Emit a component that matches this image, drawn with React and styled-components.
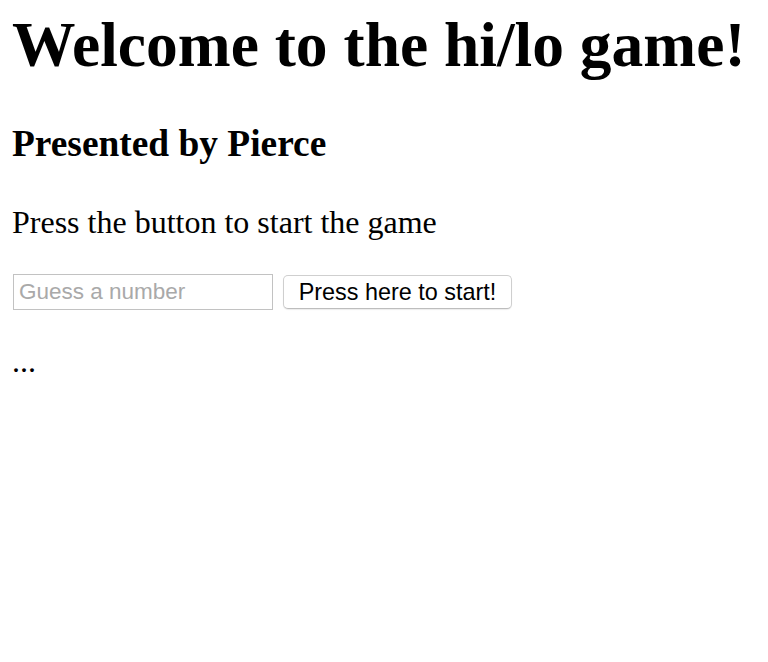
import React, { useState } from 'react';
import styled, { createGlobalStyle } from 'styled-components';

const GlobalStyle = createGlobalStyle`
  body {
    margin: 0;
    padding: 0 12px;
    background: #fff;
    color: #000;
    font-family: 'Liberation Serif', 'Times New Roman', serif;
    font-size: 32px;
  }
`;

const Title = styled.h1`
  margin: 8px 0 0;
  font-size: 63.5px;
  font-weight: bold;
  line-height: normal;
  white-space: nowrap;
`;

const Subtitle = styled.h3`
  margin: 40px 0 0;
  font-size: 37.4px;
  font-weight: bold;
  line-height: normal;
`;

const Text = styled.p`
  margin: ${({ $top }) => $top || '39px'} 0 0;
  font-size: 32px;
  line-height: normal;
`;

const GuessRow = styled.div`
  display: flex;
  align-items: center;
  gap: 10px;
  height: 38px;
  margin-top: 32px;
`;

const GuessInput = styled.input`
  box-sizing: border-box;
  width: 260px;
  height: 36px;
  margin: 0 0 0 1px;
  padding: 0 5px;
  border: 1px solid #c2c2c2;
  border-radius: 0;
  outline: none;
  font-family: 'Liberation Sans', Arial, sans-serif;
  font-size: 22.5px;
  color: #000;

  &::placeholder {
    color: #a9a9a9;
  }
`;

const StartButton = styled.button`
  box-sizing: border-box;
  width: 229px;
  height: 34px;
  margin: 0;
  padding: 0 10px;
  background: #fff;
  border: 1px solid #cfcfcf;
  border-bottom-color: #bdbdbd;
  border-radius: 5px;
  box-shadow: 0 1px 1px rgba(0, 0, 0, 0.08);
  font-family: 'Liberation Sans', Arial, sans-serif;
  font-size: 23.4px;
  color: #000;
  cursor: pointer;
`;

const App = () => {
  const [guess, setGuess] = useState('');

  return (
    <>
      <GlobalStyle />
      <Title>Welcome to the hi/lo game!</Title>
      <Subtitle>Presented by Pierce</Subtitle>
      <Text>Press the button to start the game</Text>

      <GuessRow>
        <GuessInput
          type="text"
          placeholder="Guess a number"
          value={guess}
          onChange={(e) => setGuess(e.target.value)}
        />
        <StartButton type="button">Press here to start!</StartButton>
      </GuessRow>

      <Text $top="32px">...</Text>
    </>
  );
};

export default App;
